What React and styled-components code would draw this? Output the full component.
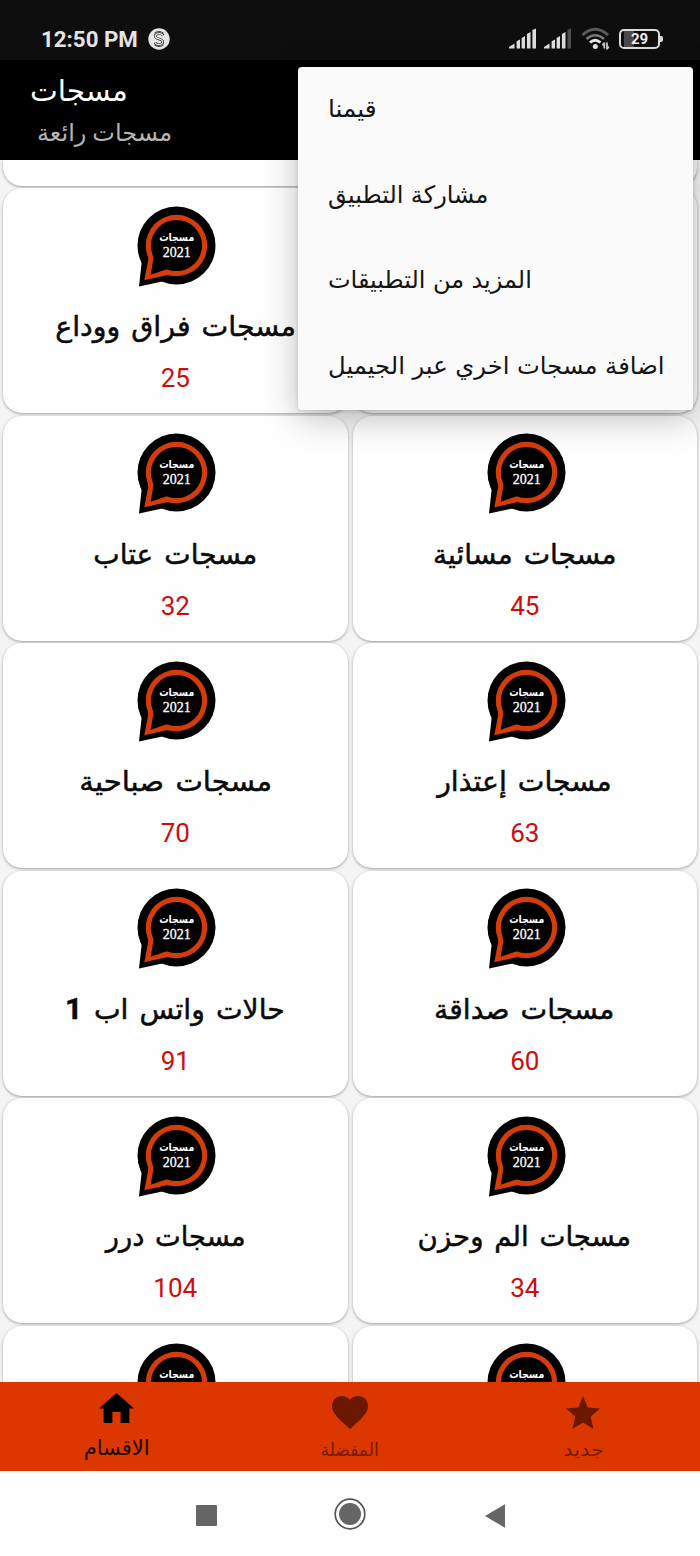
import React from "react";
import styled, { createGlobalStyle } from "styled-components";

const categories = [
  { title: "مسجات فراق ووداع", count: 25, scale: 1.015 },
  null,
  { title: "مسجات عتاب", count: 32 },
  { title: "مسجات مسائية", count: 45 },
  { title: "مسجات صباحية", count: 70, scale: 1.04 },
  { title: "مسجات إعتذار", count: 63, scale: 1.01 },
  { title: "حالات واتس اب", suffix: "1", count: 91, scale: 1.01 },
  { title: "مسجات صداقة", count: 60, scale: 1.01 },
  { title: "مسجات درر", count: 104, scale: 0.975 },
  { title: "مسجات الم وحزن", count: 34, scale: 0.985 },
];

const menuItems = [
  { label: "قيمنا", scale: 1.03 },
  { label: "مشاركة التطبيق" },
  { label: "المزيد من التطبيقات" },
  { label: "اضافة مسجات اخري عبر الجيميل", scale: 1.012 },
];

function Logo({ showYear = true }) {
  return (
    <StLogo width="80" height="82" viewBox="0 0 80 82">
      <circle cx="40.5" cy="39.5" r="39" fill="#000" />
      <path d="M1.8 45 Q5.5 53 5.6 57 L3 80.5 L24 76 L45 70 Z" fill="#000" />
      <circle cx="40.5" cy="39.5" r="30.7" fill="#d53c0b" />
      <path d="M10 43 Q13 51 12 55 L8.3 74.3 L30.7 69.3 L42 70 Z" fill="#d53c0b" />
      <circle cx="40.5" cy="39.5" r="25.6" fill="#000" />
      <path d="M15.5 45 Q18 51 17.2 54 L14.7 68.7 L30.7 63.3 L42 64 Z" fill="#000" />
      <text x="40.7" y="34.5" textLength="35" lengthAdjust="spacingAndGlyphs" fontSize="11" fontWeight="700" fontFamily="DejaVu Sans, sans-serif" textAnchor="middle" fill="#fff">
        مسجات
      </text>
      {showYear && (
        <text x="40.7" y="51" fontSize="14" fontFamily="Liberation Serif, serif" textAnchor="middle" fill="#fff" stroke="#fff" strokeWidth="0.3">
          2021
        </text>
      )}
    </StLogo>
  );
}

function Card({ item }) {
  return (
    <StCard>
      {item && (
        <>
          <Logo />
          <StCardTitle $scale={item.scale}>
            {item.title}
            {item.suffix && <b> {item.suffix}</b>}
          </StCardTitle>
          <StCount>{item.count}</StCount>
        </>
      )}
    </StCard>
  );
}

function StatusIcons() {
  return (
    <StStatusRight>
      <svg width="63" height="22" viewBox="0 0 63 22">
        {[0, 35].map((x) => (
          <g key={x} fill="#dedede">
            <path d={`M${x} 20.5 V19 L${x + 5.5} 15.5 V20.5 Z`} />
            <path d={`M${x + 7.6} 20.5 V13.2 L${x + 11} 11.4 V20.5 Z`} />
            <path d={`M${x + 12.6} 20.5 V10 L${x + 16} 8 V20.5 Z`} />
            <path d={`M${x + 17.9} 20.5 V6 L${x + 21.5} 4 V20.5 Z`} />
            <path d={`M${x + 23.4} 20.5 V2 L${x + 27} 0.5 V20.5 Z`} fill={x ? "#4e4e4e" : "#dedede"} />
          </g>
        ))}
      </svg>
      <svg width="29" height="24" viewBox="0 0 29 24">
        <path d="M1.5 8 Q14 -3.5 27 8" fill="none" stroke="#5a5a5a" strokeWidth="3" />
        <path d="M5.5 12 Q14 4.5 23 12" fill="none" stroke="#777" strokeWidth="2.6" />
        <path d="M9 15.5 Q14 11 19.5 15.5" fill="none" stroke="#e6e6e6" strokeWidth="2.8" />
        <circle cx="14.3" cy="19.5" r="2.5" fill="#e6e6e6" />
        <path d="M23.3 15.5 V21.5 M21.5 18.5 L23.3 15.8 M26 15.5 V22.5 M27.8 19.5 L26 22" fill="none" stroke="#c8c8c8" strokeWidth="1.8" />
      </svg>
      <StBattery>29</StBattery>
    </StStatusRight>
  );
}

function App() {
  return (
    <StScreen>
      <GlobalStyle />
      <StStatusBar>
        <StClock>12:50 PM</StClock>
        <svg width="22" height="22" viewBox="0 0 22 22">
          <circle cx="11" cy="11" r="10.7" fill="#e6e6e6" />
          <path d="M15 7.5 C14 4.8 7.3 4.8 7.3 8.3 C7.3 11.6 14.8 10.3 14.8 13.8 C14.8 17.2 8 17.2 7 14.5" fill="none" stroke="#222" strokeWidth="2.6" />
          <path d="M15 7.5 C14 4.8 7.3 4.8 7.3 8.3 C7.3 11.6 14.8 10.3 14.8 13.8 C14.8 17.2 8 17.2 7 14.5" fill="none" stroke="#e6e6e6" strokeWidth="1.3" />
          <path d="M6.5 5 Q11 1.8 15.5 5 M6.5 17 Q11 20.2 15.5 17" fill="none" stroke="#222" strokeWidth="0.8" />
        </svg>
        <StatusIcons />
      </StStatusBar>
      <StHeader>
        <StHeaderTitle>مسجات</StHeaderTitle>
        <StHeaderSub>مسجات رائعة</StHeaderSub>
      </StHeader>
      <StList>
        <StCardStub />
        <StCardStub />
        {categories.map((item, i) => (
          <Card key={i} item={item} />
        ))}
        <StCard>
          <Logo showYear={false} />
        </StCard>
        <StCard>
          <Logo showYear={false} />
        </StCard>
      </StList>
      <StTabs>
        <StTab $active>
          <svg width="35" height="30" viewBox="0 0 34 30" preserveAspectRatio="none">
            <path d="M17 0 L34 15.5 H29.5 V30 H21 V19 H13 V30 H4.5 V15.5 H0 Z" />
          </svg>
          <StTabLabel>الاقسام</StTabLabel>
        </StTab>
        <StTab>
          <svg width="36" height="33" viewBox="2 3 20 18.35" preserveAspectRatio="none">
            <path d="M12 21.35l-1.45-1.32C5.4 15.36 2 12.28 2 8.5 2 5.42 4.42 3 7.5 3c1.74 0 3.41.81 4.5 2.09C13.09 3.81 14.76 3 16.5 3 19.58 3 22 5.42 22 8.5c0 3.78-3.4 6.86-8.55 11.54L12 21.35z" />
          </svg>
          <StTabLabel $scale={0.95}>المفضلة</StTabLabel>
        </StTab>
        <StTab>
          <svg width="34" height="33" viewBox="2 2 20 19" preserveAspectRatio="none">
            <path d="M12 17.27 18.18 21l-1.64-7.03L22 9.24l-7.19-.61L12 2 9.19 8.63 2 9.24l5.46 4.73L5.82 21z" />
          </svg>
          <StTabLabel $scale={1.16}>جديد</StTabLabel>
        </StTab>
      </StTabs>
      <StSystemNav>
        <svg width="21" height="25" viewBox="0 0 21 25">
          <rect y="4" width="21" height="21" rx="1" fill="#656565" />
        </svg>
        <svg width="32" height="32" viewBox="0 0 32 32">
          <circle cx="16" cy="16" r="14.8" fill="none" stroke="#555" strokeWidth="1.7" />
          <circle cx="16" cy="16" r="11" fill="#656565" />
        </svg>
        <svg width="22" height="28" viewBox="0 0 22 28">
          <path d="M2 16 L22 4.3 V27.7 Z" fill="#656565" />
        </svg>
      </StSystemNav>
      <StMenu>
        {menuItems.map((item) => (
          <StMenuItem key={item.label}>
            <StMenuLabel $scale={item.scale}>{item.label}</StMenuLabel>
          </StMenuItem>
        ))}
      </StMenu>
    </StScreen>
  );
}

export default App;

const GlobalStyle = createGlobalStyle`
  * {
    box-sizing: border-box;
  }
  body {
    margin: 0;
    font-family: Roboto, "DejaVu Sans", sans-serif;
  }
  svg {
    display: block;
    flex-shrink: 0;
  }
`;
const StScreen = styled.div`
  position: relative;
  display: flex;
  flex-direction: column;
  width: 700px;
  height: 1556px;
  overflow: hidden;
  background: #fff;
`;
const StStatusBar = styled.div`
  display: flex;
  align-items: center;
  height: 60px;
  padding: 18px 40px 0 41px;
  background: #0e0e0e;
`;
const StClock = styled.span`
  width: 107px;
  font-size: 22.3px;
  font-weight: 700;
  color: #e4e4e4;
  white-space: nowrap;
`;
const StStatusRight = styled.div`
  display: flex;
  align-items: center;
  margin-left: auto;
  gap: 9px;
`;
const StBattery = styled.div`
  position: relative;
  display: flex;
  justify-content: center;
  align-items: center;
  width: 41px;
  height: 20px;
  border: 2px solid #dcdcdc;
  border-radius: 5px;
  background: linear-gradient(90deg, #0e0e0e 3px, #4a4a4a 3px, #4a4a4a 13px, #0e0e0e 13px);
  color: #eee;
  font-size: 15px;
  font-weight: 700;
  line-height: 16px;
  &::after {
    content: "";
    position: absolute;
    right: -5px;
    top: 5px;
    width: 3px;
    height: 6px;
    border-radius: 0 2px 2px 0;
    background: #dcdcdc;
  }
`;
const StHeader = styled.header`
  display: flex;
  flex-direction: column;
  align-items: flex-start;
  height: 100px;
  padding: 10px 0 0 30px;
  background: #000;
`;
const StHeaderTitle = styled.h1`
  margin: 0;
  font-size: 29.5px;
  line-height: 42px;
  font-weight: 400;
  color: #fff;
`;
const StHeaderSub = styled.p`
  margin: 0 0 0 7px;
  font-size: 24px;
  line-height: 42px;
  color: #b4b4b4;
`;
const StList = styled.main`
  display: grid;
  grid-template-columns: 1fr 1fr;
  grid-template-rows: 25.5px;
  grid-auto-rows: 225px;
  gap: 2.5px 5px;
  height: 1222px;
  padding: 0 3px;
  overflow: hidden;
  background: #f4f4f4;
`;
const StCard = styled.div`
  display: flex;
  flex-direction: column;
  align-items: center;
  padding-top: 17.5px;
  border-radius: 19px;
  background: #fefefe;
  box-shadow: 0 1px 3px rgba(0, 0, 0, 0.35);
`;
const StCardStub = styled(StCard)`
  padding: 0;
  border-radius: 0 0 19px 19px;
`;
const StLogo = styled.svg`
  margin-left: 1.5px;
`;
const StCardTitle = styled.h2`
  margin: 16.5px 0 0;
  font-size: 28px;
  line-height: 46px;
  font-weight: 400;
  color: #0a0a0a;
  white-space: nowrap;
  word-spacing: 4px;
  direction: rtl;
  -webkit-text-stroke: 0.5px #0a0a0a;
  transform: scaleX(${(props) => props.$scale || 1});
  b {
    font-size: 30px;
    line-height: 1;
  }
`;
const StCount = styled.span`
  margin-top: 11px;
  font-size: 26px;
  line-height: 34px;
  color: #cb0d0d;
`;
const StTabs = styled.nav`
  display: grid;
  grid-template-columns: repeat(3, 1fr);
  height: 89px;
  background: #dd3700;
`;
const StTab = styled.div`
  display: flex;
  flex-direction: column;
  align-items: center;
  justify-content: space-between;
  padding: ${(props) => (props.$active ? "11px 0 9px" : "14px 0 7px")};
  color: ${(props) => (props.$active ? "#160500" : "#751c00")};
  font-size: ${(props) => (props.$active ? "21px" : "18px")};
  line-height: 28px;
  svg {
    fill: ${(props) => (props.$active ? "#000" : "#6a1900")};
  }
`;
const StTabLabel = styled.span`
  transform: scaleX(${(props) => props.$scale || 1});
`;
const StSystemNav = styled.div`
  display: flex;
  justify-content: center;
  align-items: center;
  gap: 117px;
  height: 85px;
  background: #fefefe;
`;
const StMenu = styled.div`
  position: absolute;
  left: 298px;
  top: 67px;
  width: 395px;
  height: 343px;
  border-radius: 4px;
  background: #fafafa;
  box-shadow: 0 8px 34px rgba(0, 0, 0, 0.26), 0 1px 4px rgba(0, 0, 0, 0.14);
`;
const StMenuItem = styled.div`
  display: flex;
  align-items: center;
  height: 85.5px;
  padding: 0 0 1px 30px;
`;
const StMenuLabel = styled.span`
  font-size: 24px;
  color: #141414;
  white-space: nowrap;
  word-spacing: 1.5px;
  direction: rtl;
  transform: scaleX(${(props) => props.$scale || 1});
  transform-origin: left;
`;
